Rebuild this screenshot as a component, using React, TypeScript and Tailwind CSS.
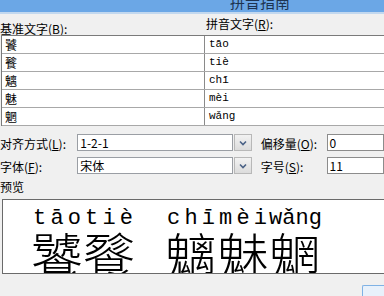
const cjk = "font-['Noto_Sans_CJK_SC',sans-serif]";

const rows = [
  { han: "饕", py: "tāo" },
  { han: "餮", py: "tiè" },
  { han: "魑", py: "chī" },
  { han: "魅", py: "mèi" },
  { han: "魍", py: "wǎng" },
];

const words = [
  [
    { han: "饕", py: "tāo" },
    { han: "餮", py: "tiè" },
  ],
  [
    { han: "魑", py: "chī" },
    { han: "魅", py: "mèi" },
    { han: "魍", py: "wǎng" },
  ],
];

const Label = ({ text, k }: { text: string; k: string }) => (
  <span className={`${cjk} text-[12px] leading-[16px] text-black whitespace-nowrap`}>
    {text}(<u>{k}</u>):
  </span>
);

const Combo = ({ value }: { value: string }) => (
  <div className="flex h-[17px] w-[183px]">
    <div className={`${cjk} flex-1 bg-white border border-[#9a9ea4] pl-[2px] text-[12px] leading-[15px] text-black`}>
      {value}
    </div>
    <div className="w-[18px] ml-[1px] bg-gradient-to-b from-[#f2f2f2] to-[#dcdcdc] border border-[#b8b8b8] flex items-center justify-center">
      <svg width="8" height="6" viewBox="0 0 8 6">
        <polyline points="1,1.5 4,4.5 7,1.5" fill="none" stroke="#4a6286" strokeWidth="1.6" />
      </svg>
    </div>
  </div>
);

const Field = ({ value }: { value: string }) => (
  <div className={`${cjk} h-[17px] w-[60px] bg-white border border-[#8c8c8c] pl-[2px] text-[12px] leading-[15px] text-black`}>
    {value}
  </div>
);

export default function App() {
  return (
    <div className="w-[384px] h-[296px] overflow-hidden bg-[#f0f0f0] flex flex-col">
      <div className="h-[12px] shrink-0 bg-[#6ba7e6] overflow-hidden pl-[230px]">
        <div className={`${cjk} -mt-[6px] text-[15px] leading-[15px] text-[#1d3350]`}>拼音指南</div>
      </div>
      <div className="h-[2px] shrink-0 bg-[#c2d8ef]" />

      <div className="h-[21px] shrink-0 flex pt-[2px]">
        <div className="w-[206px]">
          <Label text="基准文字" k="B" />
        </div>
        <Label text="拼音文字" k="R" />
      </div>

      <div className="ml-[1px] w-[400px] shrink-0 border-t border-l border-[#7a7a7a]">
        {rows.map((r) => (
          <div key={r.han} className="flex h-[18px] bg-white border-b border-[#a8a8a8]">
            <div className={`${cjk} w-[203px] pl-[3px] text-[12px] leading-[17px] text-black border-r border-[#8a8a8a]`}>
              {r.han}
            </div>
            <div className="pl-[4px] font-['Liberation_Mono',monospace] text-[11px] leading-[17px] text-black">
              {r.py}
            </div>
          </div>
        ))}
      </div>

      <div className="pt-[8px] flex flex-col gap-[6px] shrink-0">
        <div className="flex items-center h-[17px]">
          <div className="w-[81px]">
            <Label text="对齐方式" k="L" />
          </div>
          <Combo value="1-2-1" />
          <div className="w-[78px] pl-[9px]">
            <Label text="偏移量" k="O" />
          </div>
          <Field value="0" />
        </div>
        <div className="flex items-center h-[17px]">
          <div className="w-[81px]">
            <Label text="字体" k="F" />
          </div>
          <Combo value="宋体" />
          <div className="w-[78px] pl-[9px]">
            <Label text="字号" k="S" />
          </div>
          <Field value="11" />
        </div>
      </div>

      <div className={`${cjk} mt-[5px] h-[16px] text-[12px] leading-[16px] text-black shrink-0`}>预览</div>

      <div className="mt-[4px] ml-[2px] w-[400px] h-[75px] shrink-0 bg-white border border-[#6a6a6a] overflow-hidden">
        <div className="flex pl-[28px] gap-[30px]">
          {words.map((w, i) => (
            <div key={i} className="flex">
              {w.map((c) => (
                <div key={c.han} className="flex flex-col min-w-[52px]">
                  <div className="flex justify-around pt-[9px] h-[29px] font-['Liberation_Mono',monospace] text-[22px] leading-[20px] text-black">
                    {c.py.split("").map((ch, j) => (
                      <span key={j}>{ch}</span>
                    ))}
                  </div>
                  <div className={`${cjk} font-light text-[52px] leading-[52px] text-black`}>{c.han}</div>
                </div>
              ))}
            </div>
          ))}
        </div>
      </div>

      <div className="flex-1 flex justify-end items-start pt-[11px]">
        <div className="w-[22px] h-[20px] border-t border-l border-[#7fb2e5] bg-[#e8f1fb] rounded-tl-[2px]" />
      </div>
    </div>
  );
}
